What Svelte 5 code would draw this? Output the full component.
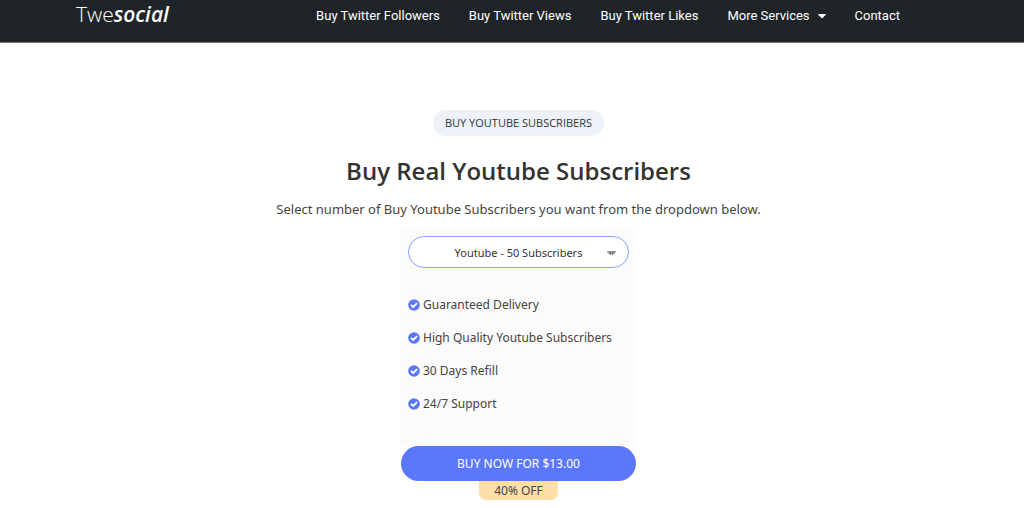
<script>
    const links = ['Buy Twitter Followers', 'Buy Twitter Views', 'Buy Twitter Likes'];
    const features = [
        'Guaranteed Delivery',
        'High Quality Youtube Subscribers',
        '30 Days Refill',
        '24/7 Support'
    ];

    let selected = '50';
</script>

<header>
    <a href="/" class="logo">Twe<b>social</b></a>
    <nav>
        {#each links as link}
            <a href="/">{link}</a>
        {/each}
        <a href="/" class="more">
            More Services
            <svg width="8" height="5" viewBox="0 0 8 5"><path d="M0.5 0h7q.8 0 .3.7L4.5 4q-.5.5-1 0L.2.7Q-.3 0 .5 0z" fill="#fff" /></svg>
        </a>
        <a href="/">Contact</a>
    </nav>
</header>

<main>
    <span class="tag">BUY YOUTUBE SUBSCRIBERS</span>
    <h1>Buy Real Youtube Subscribers</h1>
    <p class="intro">Select number of Buy Youtube Subscribers you want from the dropdown below.</p>

    <div class="card">
        <div class="picker">
            <select bind:value={selected} aria-label="Number of subscribers">
                <option value="50">Youtube - 50 Subscribers</option>
            </select>
            <svg class="arrow" width="9" height="5" viewBox="0 0 9 5">
                <path d="M0 0h9v1L7 3H2L0 1z" fill="#999" />
                <path d="M2 1h2v3H3zM5 1h2L6 4H5z" fill="#777" />
            </svg>
        </div>
        <ul>
            {#each features as feature}
                <li>
                    <svg width="12" height="12" viewBox="0 0 12 12">
                        <circle cx="6" cy="6" r="5.8" fill="#5b78fd" />
                        <path d="M3 5.8l2.2 2.2L9.1 4.1" fill="none" stroke="#fff" stroke-width="1.8" />
                    </svg>
                    {feature}
                </li>
            {/each}
        </ul>
    </div>
    <button class="buy">BUY NOW FOR $13.00</button>
    <span class="discount">40% OFF</span>
</main>

<style>
    :global(body) {
        background: #fff;
        color: #444;
        font-family: "Noto Sans", "Open Sans", sans-serif;
    }

    header {
        display: flex;
        box-sizing: border-box;
        height: 43px;
        padding: 0 124px 10px 76px;
        align-items: center;
        justify-content: space-between;
        background: #1f2428;
        border-bottom: 1px solid #777b7e;
    }

    header a {
        color: #fff;
        text-decoration: none;
    }

    .logo {
        padding-bottom: 4px;
        font-family: "Open Sans", sans-serif;
        font-size: 21px;
        font-weight: 300;
        line-height: 28px;
    }

    .logo b {
        font-weight: 600;
        font-style: italic;
    }

    nav {
        display: flex;
        gap: 29px;
        font: 400 13px/20px Roboto, sans-serif;
    }

    .more {
        display: flex;
        align-items: center;
        gap: 8px;
    }

    main {
        display: flex;
        flex-direction: column;
        align-items: center;
        padding: 67px 0 8px 13px;
    }

    .tag {
        padding: 0 12px;
        border-radius: 13px;
        background: #ecf2f7;
        color: #333;
        font-family: "Open Sans", sans-serif;
        font-size: 11px;
        font-weight: 500;
        line-height: 26px;
    }

    h1 {
        margin: 17px 0 0;
        color: #333;
        font-family: "Open Sans", sans-serif;
        font-size: 24px;
        font-weight: 600;
        line-height: 36px;
    }

    .intro {
        margin: 10px 0;
        font-size: 13px;
        line-height: 20px;
    }

    .card {
        box-sizing: border-box;
        width: 235px;
        padding: 7px 7px 26px;
        background: #fbfbfb;
    }

    .picker {
        position: relative;
    }

    select {
        appearance: none;
        display: block;
        width: 100%;
        height: 32px;
        padding: 0;
        border: 1px solid #8ea0fb;
        border-radius: 16px;
        background: #fff;
        color: #333;
        font-family: inherit;
        font-size: 11px;
        text-align: center;
        text-align-last: center;
    }

    .arrow {
        position: absolute;
        top: 15px;
        right: 13px;
        pointer-events: none;
    }

    ul {
        margin: 20px 0 0;
        padding: 0;
        list-style: none;
    }

    li {
        display: flex;
        align-items: center;
        gap: 3px;
        font-size: 12px;
        line-height: 33px;
    }

    .buy {
        width: 235px;
        height: 35px;
        padding: 0;
        border: 0;
        border-radius: 18px;
        background: #5b78fd;
        color: #fff;
        font-family: inherit;
        font-size: 12px;
        cursor: pointer;
    }

    .discount {
        padding: 0 15px;
        border-radius: 0 0 7px 7px;
        background: #ffdfa8;
        font-size: 12px;
        line-height: 19px;
    }
</style>
